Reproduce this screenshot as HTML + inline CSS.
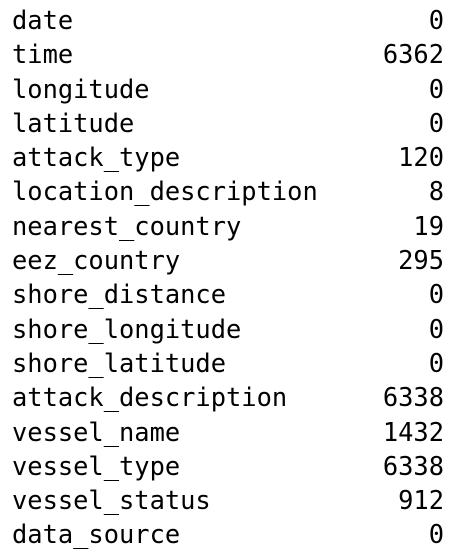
<!DOCTYPE html>
<html><head><meta charset="utf-8"><style>
html,body{margin:0;padding:0;background:#fff;width:458px;height:554px;overflow:hidden}
.w{position:absolute;left:12px;top:3px;width:432px;font-family:"DejaVu Sans Mono","Liberation Mono",monospace;font-size:25.4px;line-height:34.3px;color:#000}
.r{display:flex;justify-content:space-between;white-space:pre}
</style></head><body><div class="w">
<div class="r"><span>date</span><span>0</span></div>
<div class="r"><span>time</span><span>6362</span></div>
<div class="r"><span>longitude</span><span>0</span></div>
<div class="r"><span>latitude</span><span>0</span></div>
<div class="r"><span>attack_type</span><span>120</span></div>
<div class="r"><span>location_description</span><span>8</span></div>
<div class="r"><span>nearest_country</span><span>19</span></div>
<div class="r"><span>eez_country</span><span>295</span></div>
<div class="r"><span>shore_distance</span><span>0</span></div>
<div class="r"><span>shore_longitude</span><span>0</span></div>
<div class="r"><span>shore_latitude</span><span>0</span></div>
<div class="r"><span>attack_description</span><span>6338</span></div>
<div class="r"><span>vessel_name</span><span>1432</span></div>
<div class="r"><span>vessel_type</span><span>6338</span></div>
<div class="r"><span>vessel_status</span><span>912</span></div>
<div class="r"><span>data_source</span><span>0</span></div>
</div></body></html>
